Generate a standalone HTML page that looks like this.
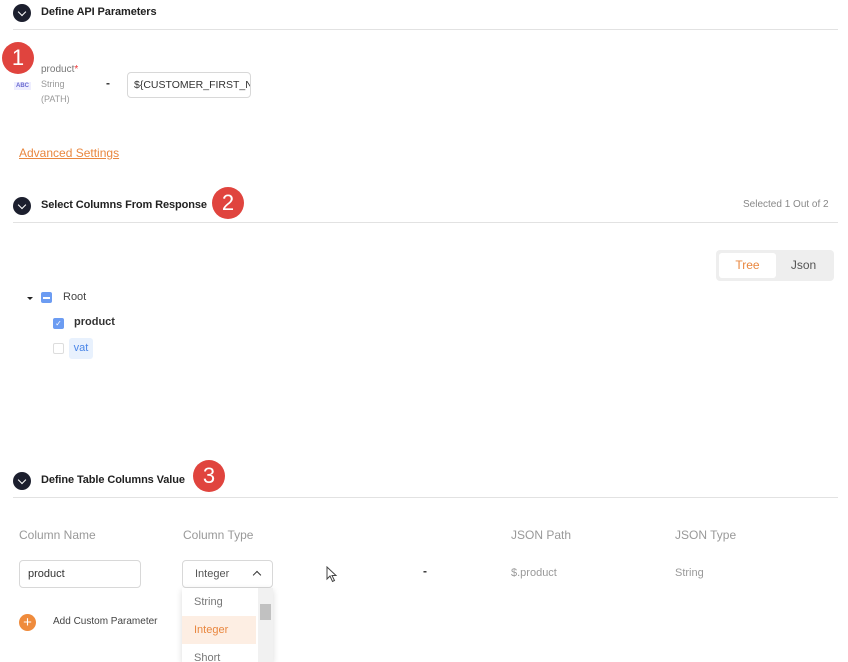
<!DOCTYPE html>
<html><head><style>
*{box-sizing:border-box;margin:0;padding:0}
body{width:848px;height:662px;background:#fff;font-family:"Liberation Sans",sans-serif;position:relative;overflow:hidden;color:#333}
.a{position:absolute}
.chev{width:18px;height:18px;border-radius:50%;background:#1c1f2e}
.chev:after{content:"";position:absolute;left:6px;top:5px;width:5px;height:5px;border-right:1.5px solid #fff;border-bottom:1.5px solid #fff;transform:rotate(45deg)}
.h{font-size:11px;font-weight:bold;color:#222;letter-spacing:-0.1px}
.line{height:1px;background:#e2e2e2}
.badge{width:32px;height:32px;border-radius:50%;background:#e0443e;color:#fff;font-size:22px;text-align:center;line-height:32px}
.s{font-size:11px;color:#888}
.inp{border:1px solid #d8d8d8;border-radius:4px;font-size:11px;padding-left:8px;background:#fff}
</style></head><body>
<div class="a chev" style="left:13px;top:4px"></div>
<div class="a h" style="left:41px;top:6px">Define API Parameters</div>
<div class="a line" style="left:13px;top:29px;width:825px"></div>
<div class="a badge" style="left:2px;top:42px">1</div>
<div class="a" style="left:14px;top:82px;font-size:6px;color:#6a6ad0;background:#eef;padding:1px 2px;font-weight:bold">ABC</div>
<div class="a" style="left:41px;top:64px;font-size:10px;color:#777">product<span style="color:#e33">*</span></div>
<div class="a" style="left:41px;top:79px;font-size:9px;color:#999">String</div>
<div class="a" style="left:41px;top:94px;font-size:9px;color:#999">(PATH)</div>
<div class="a" style="left:106px;top:76px;font-size:12px;font-weight:bold">-</div>
<div class="a inp" style="left:127px;top:72px;width:124px;height:26px;line-height:24px;overflow:hidden;white-space:nowrap;padding-left:6px;color:#333;font-size:10.5px">${CUSTOMER_FIRST_NA</div>
<div class="a" style="left:19px;top:146px;font-size:12px;color:#e9873f;text-decoration:underline">Advanced Settings</div>

<div class="a chev" style="left:13px;top:197px"></div>
<div class="a h" style="left:41px;top:199px">Select Columns From Response</div>
<div class="a badge" style="left:212px;top:187px">2</div>
<div class="a s" style="left:743px;top:199px;font-size:10px">Selected 1 Out of 2</div>
<div class="a line" style="left:13px;top:222px;width:825px"></div>
<div class="a" style="left:716px;top:250px;width:118px;height:31px;background:#eee;border-radius:4px"></div>
<div class="a" style="left:719px;top:253px;width:57px;height:25px;background:#fff;border-radius:3px;color:#e9873f;font-size:12px;text-align:center;line-height:25px">Tree</div>
<div class="a" style="left:776px;top:253px;width:55px;height:25px;color:#555;font-size:12px;text-align:center;line-height:25px">Json</div>
<div class="a" style="left:27px;top:297px;width:0;height:0;border:3px solid transparent;border-top:3px solid #222"></div>
<div class="a" style="left:41px;top:292px;width:11px;height:11px;background:#6c9cf2;border-radius:2px"><div style="margin:5px 2px;height:1.5px;background:#fff"></div></div>
<div class="a" style="left:63px;top:291px;font-size:11px;color:#444">Root</div>
<div class="a" style="left:53px;top:318px;width:11px;height:11px;background:#6c9cf2;border-radius:2px;color:#fff;font-size:8px;text-align:center;line-height:11px">✓</div>
<div class="a" style="left:74px;top:316px;font-size:11px;font-weight:bold;color:#333">product</div>
<div class="a" style="left:53px;top:343px;width:11px;height:11px;border:1px solid #ddd;border-radius:2px"></div>
<div class="a" style="left:69px;top:338px;width:24px;height:21px;background:#e8f1fd;border-radius:3px;color:#4a86e8;font-size:11px;text-align:center;line-height:20px">vat</div>

<div class="a chev" style="left:13px;top:472px"></div>
<div class="a h" style="left:41px;top:474px">Define Table Columns Value</div>
<div class="a badge" style="left:193px;top:460px">3</div>
<div class="a line" style="left:13px;top:497px;width:825px"></div>
<div class="a s" style="left:19px;top:528px;font-size:12px;color:#999">Column Name</div>
<div class="a s" style="left:183px;top:528px;font-size:12px;color:#999">Column Type</div>
<div class="a s" style="left:511px;top:528px;font-size:12px;color:#999">JSON Path</div>
<div class="a s" style="left:675px;top:528px;font-size:12px;color:#999">JSON Type</div>
<div class="a inp" style="left:19px;top:560px;width:122px;height:28px;line-height:26px">product</div>
<div class="a inp" style="left:182px;top:560px;width:91px;height:28px;line-height:26px;padding-left:12px;color:#555">Integer<span style="position:absolute;right:12px;top:11px;width:6px;height:6px;border-left:1.5px solid #333;border-top:1.5px solid #333;transform:rotate(45deg)"></span></div>
<svg class="a" style="left:326px;top:566px" width="12" height="17" viewBox="0 0 12 17"><path d="M1 1 L1 13 L4 10 L6.5 15.5 L8.5 14.5 L6 9.5 L10 9.5 Z" fill="#fff" stroke="#444" stroke-width="1"/></svg>
<div class="a" style="left:423px;top:564px;font-size:12px;font-weight:bold">-</div>
<div class="a" style="left:511px;top:567px;font-size:11px;color:#999">$.product</div>
<div class="a" style="left:675px;top:567px;font-size:11px;color:#999">String</div>
<div class="a" style="left:182px;top:588px;width:91px;height:74px;background:#fff;box-shadow:0 2px 6px rgba(0,0,0,.15);overflow:hidden">
<div style="height:28px;line-height:28px;padding-left:12px;font-size:11px;color:#777">String</div>
<div style="height:28px;line-height:28px;padding-left:12px;font-size:11px;color:#e9873f;background:#fdeee3;width:74px">Integer</div>
<div style="height:28px;line-height:28px;padding-left:12px;font-size:11px;color:#777">Short</div>
<div style="position:absolute;right:0;top:0;width:15px;height:74px;background:#f1f1f1"><div style="margin:16px 2px;height:16px;background:#c1c1c1"></div></div>
</div>
<div class="a" style="left:19px;top:614px;width:17px;height:17px;border-radius:50%;background:#ef8b3c;color:#fff;text-align:center;line-height:17px;font-size:15px">+</div>
<div class="a" style="left:53px;top:616px;font-size:10px;color:#444">Add Custom Parameter</div>
</body></html>
